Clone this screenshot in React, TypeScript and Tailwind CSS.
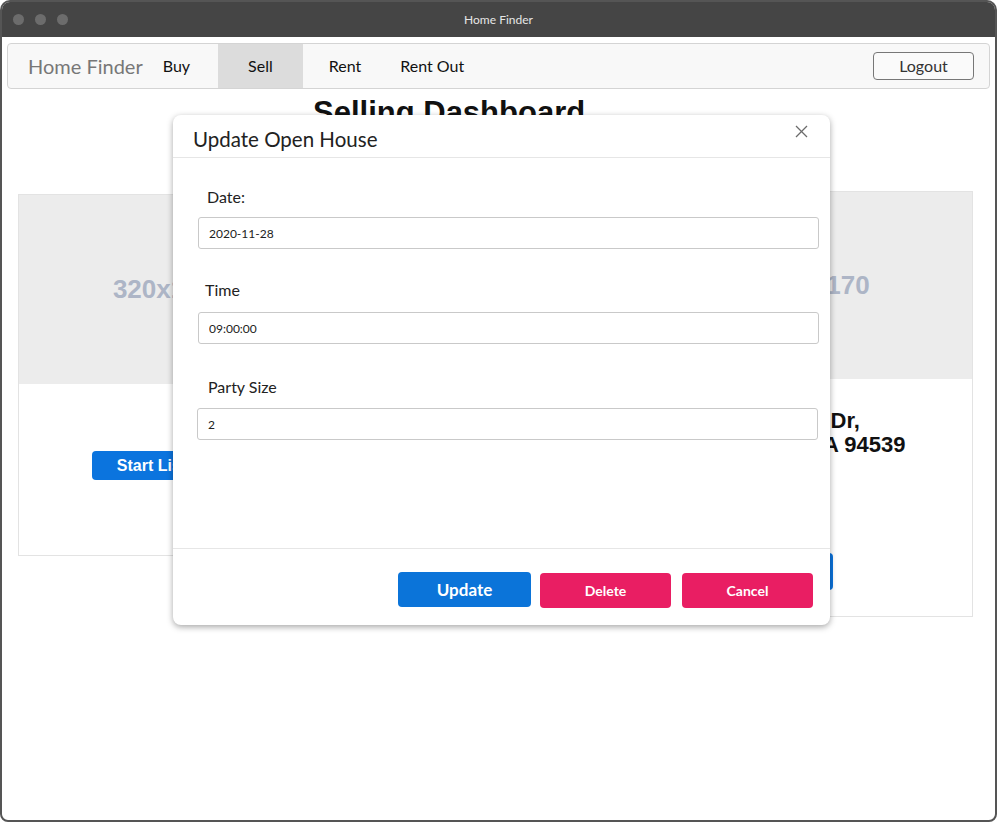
import React from 'react';

const ui = "font-['Lato','Noto_Sans',sans-serif]";
const arial = "font-['Liberation_Sans',Arial,sans-serif]";

function CloseIcon() {
  return (
    <svg width="13" height="13" viewBox="0 0 13 13" fill="none" stroke="#6b6b6b" strokeWidth="1.3">
      <line x1="1" y1="1" x2="12" y2="12" />
      <line x1="12" y1="1" x2="1" y2="12" />
    </svg>
  );
}

function Field({ label, value, labelPad, gap }: { label: string; value: string; labelPad: string; gap: string }) {
  return (
    <div className="flex flex-col">
      <label className={`text-[16px] leading-[20px] text-[#222] ${labelPad}`}>{label}</label>
      <input
        readOnly
        value={value}
        className={`${gap} h-[32px] w-[621px] rounded-[3px] border border-[#c9c9c9] bg-white px-[10px] text-[12px] text-[#222] outline-none`}
      />
    </div>
  );
}

export default function App() {
  const navLinks = [
    { name: 'Buy', cls: 'pl-[20px] pr-[28px]' },
    { name: 'Sell', cls: 'px-[30px] bg-[#dcdcdc]' },
    { name: 'Rent', cls: 'pl-[26px] pr-[20px]' },
    { name: 'Rent Out', cls: 'pl-[19px] pr-[18px]' },
  ];

  return (
    <div className={`relative h-[823px] w-[1000px] bg-white ${ui}`}>
      {/* window frame */}
      <div className="flex h-[822px] w-[997px] flex-col overflow-hidden rounded-t-[10px] rounded-b-[8px] border-2 border-[#555] bg-white">
        <div className="relative flex h-[35px] shrink-0 items-center bg-[#454545] px-[11px]">
          <div className="flex gap-[11px]">
            <span className="h-[11px] w-[11px] rounded-full bg-[#6c6c6c]" />
            <span className="h-[11px] w-[11px] rounded-full bg-[#6c6c6c]" />
            <span className="h-[11px] w-[11px] rounded-full bg-[#6c6c6c]" />
          </div>
          <div className="absolute inset-0 flex items-center justify-center text-[12px] text-[#e6e6e6]">Home Finder</div>
        </div>

        {/* navbar */}
        <nav className="mx-[5px] mt-[6px] flex h-[46px] items-center rounded-[4px] border border-[#d4d4d4] bg-[#f8f8f8] pr-[15px]">
          <span className="pl-[20px] text-[20px] text-[#777]">Home Finder</span>
          <div className="flex h-full items-stretch">
            {navLinks.map((l) => (
              <a key={l.name} className={`flex items-center text-[16px] text-[#111] ${l.cls}`}>
                {l.name}
              </a>
            ))}
          </div>
          <button className="ml-auto h-[28px] w-[101px] rounded-[4px] border border-[#777] bg-[#fafafa] text-[16px] text-[#333]">
            Logout
          </button>
        </nav>

        {/* dashboard */}
        <h1 className={`mt-[8px] pl-[311px] text-[31px] font-bold leading-[31px] text-[#111] ${arial}`}>Selling Dashboard</h1>

        <div className="mt-[63px] flex items-start gap-[16px] pl-[16px] pr-[22px]">
          <div className="mt-[3px] flex h-[362px] w-[291px] flex-col border border-[#e3e3e3]">
            <div className={`flex h-[189px] items-center justify-center bg-[#ececec] text-[26px] font-bold text-[#adb5c6] ${arial}`}>320x170</div>
            <div className="flex flex-1 items-start justify-center pt-[67px]">
              <button className={`h-[29px] rounded-[4px] bg-[#0b74de] px-[25px] text-[16px] font-bold text-white ${arial}`}>Start Listing</button>
            </div>
          </div>
          <div className="flex h-[420px] flex-1 flex-col border border-[#e3e3e3]">
            <div className={`flex h-[187px] items-center justify-center bg-[#ececec] text-[26px] font-bold text-[#adb5c6] ${arial}`}>320x170</div>
          </div>
          <div className="flex h-[426px] w-[308px] flex-col border border-[#e3e3e3]">
            <div className={`flex h-[187px] items-center justify-center bg-[#ececec] text-[26px] font-bold text-[#adb5c6] ${arial}`}>320x170</div>
            <div className="flex flex-1 flex-col pl-[41px] pt-[30px]">
              <p className={`text-[22px] font-bold leading-[24px] text-[#111] ${arial}`}>
                4821 Maple Dr,<br />Fremont, CA 94539
              </p>
              <button className={`mt-[96px] h-[37px] w-[126px] rounded-[4px] bg-[#0b74de] text-[16px] font-bold text-white ${arial}`}>Edit</button>
            </div>
          </div>
        </div>
      </div>

      {/* modal */}
      <div className="absolute left-[173px] top-[115px] flex h-[510px] w-[657px] flex-col rounded-[8px] bg-white shadow-[0_2px_6px_rgba(0,0,0,0.35)]">
        <div className="relative flex h-[43px] shrink-0 items-end border-b border-[#e6e6e6] pb-[6px] pl-[20px]">
          <h2 className="text-[20.5px] leading-[24px] text-[#222]">Update Open House</h2>
          <button className="absolute right-[22px] top-[10px]">
            <CloseIcon />
          </button>
        </div>

        <div className="flex flex-1 flex-col pl-[25px] pt-[29px]">
          <Field label="Date:" value="2020-11-28" labelPad="pl-[9px]" gap="mt-[10px]" />
          <div className="mt-[31px]">
            <Field label="Time" value="09:00:00" labelPad="pl-[7px]" gap="mt-[12px]" />
          </div>
          <div className="mt-[33px] -ml-[1px]">
            <Field label="Party Size" value="2" labelPad="pl-[11px]" gap="mt-[11px]" />
          </div>
        </div>

        <div className="flex h-[77px] shrink-0 items-start justify-end gap-[9px] border-t border-[#e6e6e6] pr-[17px] pt-[23px]">
          <button className="h-[35px] w-[133px] rounded-[4px] bg-[#0b74d9] text-[17px] font-bold text-white">Update</button>
          <button className="mt-[1px] h-[35px] w-[131px] rounded-[4px] bg-[#e91e63] text-[14px] font-bold text-white">Delete</button>
          <button className="ml-[2px] mt-[1px] h-[35px] w-[131px] rounded-[4px] bg-[#e91e63] text-[14px] font-bold text-white">Cancel</button>
        </div>
      </div>
    </div>
  );
}
